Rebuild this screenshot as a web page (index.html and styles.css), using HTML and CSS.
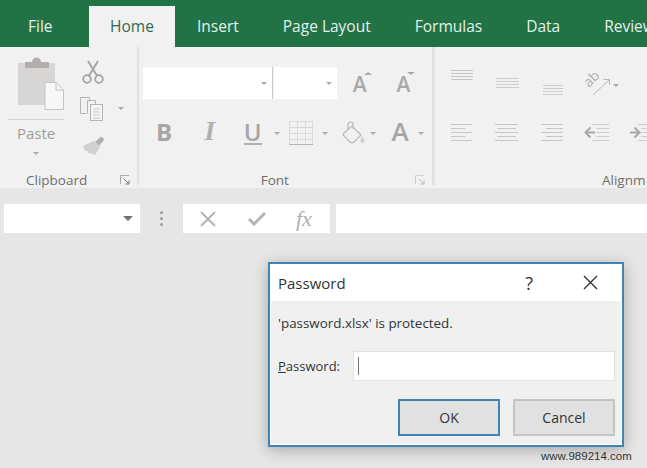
FILE: index.html
```html
<!DOCTYPE html>
<html lang="en">
<head>
<meta charset="utf-8">
<title>Password</title>
<link rel="stylesheet" href="styles.css">
</head>
<body>
<div class="app">
  <nav class="tabs">
    <span class="tab tab-file">File</span>
    <span class="tab tab-home">Home</span>
    <span class="tab">Insert</span>
    <span class="tab">Page Layout</span>
    <span class="tab">Formulas</span>
    <span class="tab">Data</span>
    <span class="tab">Review</span>
  </nav>

  <section class="ribbon">
    <div class="group group-clipboard">
      <div class="clip-body">
        <div class="paste">
          <svg class="paste-icon" width="46" height="53" viewBox="0 0 46 53">
            <rect x="0" y="6" width="37" height="42" fill="#d8d5d5"/>
            <path d="M7 5h7a4 4 0 0 1 9 0h8v6H7z" fill="#b3aeae"/>
            <path d="M27 25.500h11l7.500 7.500v19.500H27z" fill="#f7f7f7" stroke="#c4c4c4"/>
            <path d="M38 25.500v7.500h7.500" fill="none" stroke="#c4c4c4"/>
          </svg>
          <span class="paste-rule"></span>
          <span class="paste-label">Paste</span>
          <span class="caret caret-paste"></span>
        </div>
        <div class="clip-tools">
          <svg width="22" height="24" viewBox="0 0 22 24" fill="none" stroke="#a3a3a3" stroke-width="1.800">
            <circle cx="5" cy="19" r="3.800"/><circle cx="17" cy="19" r="3.800"/>
            <path d="M7 15.800 16 1M15 15.800 6 1"/>
          </svg>
          <div class="copy-row">
            <svg width="24" height="25" viewBox="0 0 24 25" fill="none" stroke="#b4b4b4">
              <path d="M.5 1.500h9v4M.5 1.500v16h6" />
              <path d="M7.500 4.500h8v4M7.500 4.500v13" />
              <rect x="10.500" y="8.500" width="12" height="16" fill="#f4f4f4"/>
              <path d="M13 13h7M13 16h7M13 19h7M13 22h7" stroke="#c8c8c8"/>
            </svg>
            <span class="caret caret-copy"></span>
          </div>
          <svg class="brush" width="23" height="20" viewBox="0 0 23 20">
            <path d="M13 6 19 .5l3.500 3L17 10z" fill="#b0b0b0"/>
            <path d="M1 10 12 5l6 6-5 8-4-2-2 1-1-3-3 0z" fill="#d0d0d0"/>
          </svg>
        </div>
      </div>
      <div class="group-label label-clipboard">
        <span>Clipboard</span>
        <svg class="launcher launcher-clip" width="10" height="10" viewBox="0 0 10 10" fill="none" stroke="#a8a8a8">
          <path d="M.5 9V.5H9"/><path d="M4 4l4.500 4.500M9 5.500V9H5.500" stroke="#777"/>
        </svg>
      </div>
    </div>

    <div class="group group-font">
      <div class="font-top">
        <div class="combo combo-name"><span class="caret"></span></div>
        <div class="combo combo-size"><span class="caret"></span></div>
        <span class="size-a size-up">A</span>
        <span class="size-a size-down">A</span>
      </div>
      <div class="font-row">
        <span class="tool tool-b">B</span>
        <span class="tool tool-i">I</span>
        <span class="tool tool-u"><span class="u-letter">U</span></span>
        <span class="tool-caret"><span class="caret"></span></span>
        <span class="tool tool-border">
          <svg width="24" height="24" viewBox="0 0 24 24" fill="none" stroke="#d9d9e0">
            <path d="M.5 .5h23v23H.5zM.5 6.500h23M.5 12.500h23M.5 18.500h23M8.500 .5v23M16.500 .5v23"/>
            <path d="M0 23.500h24" stroke="#b5b5b5"/>
          </svg>
        </span>
        <span class="tool-caret"><span class="caret"></span></span>
        <span class="tool tool-fill">
          <svg width="23" height="24" viewBox="0 0 23 24" fill="none" stroke="#b8b8b8" stroke-width="1.200">
            <path d="M2 12 10 5l9 9-7 7a3 3 0 0 1-4 0l-6-6a2 2 0 0 1 0-3z"/>
            <path d="M6 8V3.500a2.500 2.500 0 0 1 5 0V8"/>
            <path d="M20 15c2 3 2.500 4 2.500 5a2 2 0 0 1-4 0c0-1 .5-2 1.500-5z" fill="#d0d0d0" stroke="none"/>
          </svg>
        </span>
        <span class="tool-caret"><span class="caret"></span></span>
        <span class="tool tool-a">A</span>
        <span class="tool-caret"><span class="caret"></span></span>
      </div>
      <div class="group-label label-font">
        <span>Font</span>
        <svg class="launcher launcher-font" width="10" height="10" viewBox="0 0 10 10" fill="none" stroke="#d0d0d0">
          <path d="M.5 9V.5H9"/><path d="M4 4l4.500 4.500M9 5.500V9H5.500" stroke="#b8b8b8"/>
        </svg>
      </div>
    </div>

    <div class="group group-align">
      <div class="align-top">
        <svg class="al-1" width="22" height="11" viewBox="0 0 22 11" stroke="#c6c6c6" fill="none"><path d="M0 .5h22M0 3.500h22M0 6.500h22M0 9.500h22"/></svg>
        <svg class="al-2" width="23" height="11" viewBox="0 0 23 11" stroke="#cdcdcd" fill="none"><path d="M0 .5h23M0 3.500h23M0 6.500h23M0 9.500h23"/></svg>
        <svg class="al-3" width="24" height="11" viewBox="0 0 24 11" stroke="#cdcdcd" fill="none"><path d="M2 .5h20M2 3.500h20M2 6.500h20M2 9.500h20"/></svg>
        <svg class="al-4" width="28" height="25" viewBox="0 0 28 25" fill="none" stroke="#b5b5b5">
          <text class="orient-text" x="5" y="17" transform="rotate(-45 5 17)">ab</text>
          <path d="M9 24 25 9M19.500 8.500h6V14"/>
        </svg>
        <span class="caret caret-orient"></span>
      </div>
      <div class="align-row">
        <svg class="al-item" width="22" height="18" viewBox="0 0 22 18" stroke="#c6c6c6" fill="none"><path d="M0 .5h21M0 4.500h14M0 8.500h21M0 12.500h14M0 16.500h21"/></svg>
        <svg class="al-item" width="23" height="18" viewBox="0 0 23 18" stroke="#c6c6c6" fill="none"><path d="M0 .5h23M2 4.500h19M0 8.500h23M2 12.500h19M0 16.500h23"/></svg>
        <svg class="al-item" width="23" height="18" viewBox="0 0 23 18" stroke="#c6c6c6" fill="none"><path d="M1 .5h22M6 4.500h17M1 8.500h22M6 12.500h17M1 16.500h22"/></svg>
        <svg class="al-item al-outdent" width="25" height="18" viewBox="0 0 25 18" fill="none" stroke="#cdcdcd">
          <path d="M8 .5h17M12 4.500h13M12 8.500h13M12 12.500h13M8 16.500h17"/>
          <path d="M11 8.500H2M6.500 3.500l-5 5 5 5" stroke="#a8a8a8" stroke-width="2"/>
        </svg>
        <svg class="al-item" width="17" height="18" viewBox="0 0 17 18" fill="none" stroke="#cdcdcd">
          <path d="M8 .5h9M11 4.500h6M11 8.500h6M11 12.500h6M8 16.500h9"/>
          <path d="M0 8.500h8M4.500 3.500l5 5-5 5" stroke="#a8a8a8" stroke-width="2"/>
        </svg>
      </div>
      <div class="group-label label-align"><span>Alignm</span></div>
    </div>
  </section>

  <section class="formula-bar">
    <div class="name-box"><span class="name-arrow"></span></div>
    <div class="grip"><i></i><i></i><i></i></div>
    <div class="fx-buttons">
      <svg width="16" height="16" viewBox="0 0 16 16" fill="none" stroke="#b4b4b4" stroke-width="2"><path d="M1 1l14 14M15 1 1 15"/></svg>
      <svg width="18" height="14" viewBox="0 0 18 14" fill="none" stroke="#b4b4b4" stroke-width="3"><path d="M1 7l5 5L17 1"/></svg>
      <span class="fx">fx</span>
    </div>
    <div class="formula-input"></div>
  </section>

  <section class="dialog" aria-label="Password">
    <header class="dialog-title">
      <span class="dialog-name">Password</span>
      <span class="dialog-help">?</span>
      <svg class="dialog-close" width="15" height="15" viewBox="0 0 15 15" fill="none" stroke="#333" stroke-width="1.400"><path d="M1 1l13 13M14 1 1 14"/></svg>
    </header>
    <div class="dialog-body">
      <p class="dialog-msg">'password.xlsx' is protected.</p>
      <div class="dialog-field">
        <label class="field-label"><u>P</u>assword:</label>
        <div class="field-input"><span class="cursor"></span></div>
      </div>
      <div class="dialog-actions">
        <button class="btn btn-ok">OK</button>
        <button class="btn">Cancel</button>
      </div>
    </div>
  </section>

  <span class="watermark">www.989214.com</span>
</div>
</body>
</html>
```

FILE: styles.css
```css
* { box-sizing: border-box; }
html, body { margin: 0; padding: 0; }
body { font-family: "Open Sans", "Noto Sans", sans-serif; }

.app {
  position: relative;
  width: 647px;
  height: 468px;
  overflow: hidden;
  background: #e6e6e6;
}

/* Tabs */
.tabs {
  display: flex;
  align-items: flex-end;
  height: 47px;
  overflow: hidden;
  background: #217346;
  white-space: nowrap;
}
.tab {
  flex: none;
  padding: 0 22px;
  height: 41px;
  line-height: 41px;
  font-size: 15.5px;
  color: #e6f0ea;
}
.tab-file { width: 89px; padding: 0 0 0 28px; }
.tab-home {
  width: 86px;
  padding: 0;
  text-align: center;
  background: #f1f1f1;
  color: #2f6b50;
}

/* Ribbon */
.ribbon {
  display: flex;
  height: 141px;
  background: #f1f1f1;
}
.group {
  position: relative;
  display: flex;
  flex-direction: column;
  height: 138px;
  border-right: 2px solid #e1e1e1;
}
.group-clipboard { width: 139px; }
.group-font { width: 296px; padding-left: 4px; }
.group-align { flex: 1; padding-left: 16px; border-right: 0; border-left: 1px solid #e8e8e8; }

.group-label {
  display: flex;
  align-items: center;
  height: 20px;
  margin-top: auto;
  margin-bottom: -5px;
  font-size: 13.5px;
  color: #6e6e6e;
}
.label-clipboard { padding-left: 26px; }
.label-font { padding-left: 118px; }
.label-align { padding-left: 151px; }
.launcher-clip { margin-left: 33px; }
.launcher-font { margin-left: 126px; }

.caret {
  display: inline-block;
  width: 0;
  height: 0;
  border-left: 3px solid transparent;
  border-right: 3px solid transparent;
  border-top: 3px solid #aaa;
}

/* Clipboard */
.clip-body { display: flex; padding: 10px 0 0 8px; }
.paste { display: flex; flex-direction: column; width: 56px; }
.paste-icon { margin-left: 10px; }
.paste-rule { height: 1px; margin-top: 9px; background: #d2d2d2; }
.paste-label { margin: 3px 0 0 9px; font-size: 15px; line-height: 20px; color: #9d9d9d; }
.caret-paste { margin: 9px 0 0 25px; }
.clip-tools { display: flex; flex-direction: column; margin: 3px 0 0 18px; }
.copy-row { display: flex; align-items: center; margin: 12px 0 0 -2px; }
.caret-copy { margin-left: 14px; }
.brush { margin-top: 15px; }

/* Font */
.font-top { display: flex; align-items: flex-start; margin-top: 20px; }
.combo {
  display: flex;
  align-items: center;
  justify-content: flex-end;
  height: 32px;
  padding-right: 5px;
  background: #fff;
}
.combo-name { width: 130px; border-right: 1px solid #c9c9c9; }
.combo-size { width: 63px; margin-left: 1px; }
.size-a { position: relative; font-size: 21px; line-height: 28px; margin-top: 3px; font-weight: 600; color: #a8a8a8; }
.size-up { margin-left: 16px; }
.size-down { margin-left: 30px; }
.size-a::after {
  content: "";
  position: absolute;
  top: 2px;
  right: -5px;
  border-left: 4px solid transparent;
  border-right: 4px solid transparent;
}
.size-up::after { border-bottom: 3px solid #aaa; }
.size-down::after { border-top: 3px solid #aaa; }

.font-row { display: flex; align-items: center; height: 28px; margin-top: 20px; }
.tool { display: flex; align-items: center; justify-content: center; height: 28px; color: #a6a6a6; }
.tool-b { width: 43px; padding-bottom: 4px; font-size: 24px; font-weight: 700; }
.tool-i { width: 48px; padding-bottom: 4px; font-family: "Liberation Serif", serif; font-size: 27px; font-style: italic; font-weight: 700; color: #b0b0b0; }
.tool-u { width: 38px; padding-bottom: 2px; font-size: 24px; font-weight: 600; }
.u-letter { line-height: 23px; border-bottom: 2px solid #b0b0b0; }
.tool-border { width: 38px; }
.tool-fill { width: 38px; justify-content: flex-end; padding-right: 3px; }
.tool-a { width: 38px; justify-content: flex-end; padding: 0 7px 4px 0; font-size: 26px; font-weight: 600; }
.tool-caret { display: flex; justify-content: center; width: 10px; }

/* Alignment */
.align-top { display: flex; height: 26px; margin-top: 23px; }
.al-1 { margin-right: 23px; }
.al-2 { margin: 8px 22px 0 0; }
.al-3 { margin: 15px 19px 0 0; }
.al-4 { margin-top: 1px; overflow: visible; }
.orient-text { font-size: 14px; fill: #b0b0b0; stroke: none; }
.caret-orient { margin: 14px 0 0 1px; }
.align-row { display: flex; gap: 22px; margin-top: 28px; }
.al-outdent { margin-right: -1px; }
.group-align .al-item:nth-child(4) { margin-left: -1px; }

/* Formula bar */
.formula-bar {
  display: flex;
  align-items: stretch;
  height: 29px;
  margin-top: 16px;
  padding-left: 4px;
}
.name-box {
  display: flex;
  align-items: center;
  justify-content: flex-end;
  width: 136px;
  padding-right: 7px;
  background: #fff;
}
.name-arrow {
  border-left: 5px solid transparent;
  border-right: 5px solid transparent;
  border-top: 5px solid #707070;
}
.grip {
  display: flex;
  flex-direction: column;
  justify-content: center;
  gap: 3px;
  width: 43px;
  align-items: center;
}
.grip i { width: 3px; height: 3px; border-radius: 50%; background: #9c9c9c; }
.fx-buttons {
  display: flex;
  align-items: center;
  width: 147px;
  padding-left: 17px;
  background: #fff;
}
.fx-buttons svg:nth-child(2) { margin-left: 32px; }
.fx {
  margin-left: 30px;
  font-family: "Liberation Serif", serif;
  font-size: 22px;
  font-style: italic;
  color: #b0b0b0;
}
.formula-input { flex: 1; margin-left: 6px; background: #fff; }

/* Dialog */
.dialog {
  position: absolute;
  left: 268px;
  top: 262px;
  display: flex;
  flex-direction: column;
  width: 356px;
  height: 185px;
  border: 2px solid #3d85b5;
  background: #f0f0f0;
  box-shadow: 0 3px 14px rgba(0, 0, 0, .28);
  color: #333;
}
.dialog-title {
  display: flex;
  align-items: center;
  height: 37px;
  padding: 0 24px 0 8px;
  background: #fff;
}
.dialog-name { font-size: 15px; }
.dialog-help { margin-left: auto; font-size: 18px; }
.dialog-close { margin-left: 50px; }
.dialog-body { flex: 1; padding: 0 0 0 7px; border-left: 1px solid #fff; border-right: 1px solid #fff; border-bottom: 1px solid #fff; }
.dialog-msg { margin: 12px 0 0; font-size: 13.4px; line-height: 20px; }
.dialog-field { display: flex; align-items: center; margin-top: 18px; }
.field-label { width: 75px; font-size: 13px; }
.field-input {
  display: flex;
  align-items: center;
  width: 262px;
  height: 30px;
  padding-left: 4px;
  background: #fff;
  border: 1px solid #e2e2e2;
}
.cursor { width: 1px; height: 18px; background: #777; }
.dialog-actions { display: flex; justify-content: flex-start; gap: 13px; margin: 18px 0 0 120px; }
.btn {
  width: 102px;
  height: 37px;
  padding: 0;
  font-family: inherit;
  font-size: 14px;
  color: #333;
  background: #e1e1e1;
  border: 2px solid #c4c4c4;
}
.btn-ok { border-color: #3d85b5; }

.watermark {
  position: absolute;
  left: 541px;
  top: 448px;
  font-family: "Liberation Sans", sans-serif;
  font-size: 11.5px;
  line-height: 16px;
  color: #333;
}
```
